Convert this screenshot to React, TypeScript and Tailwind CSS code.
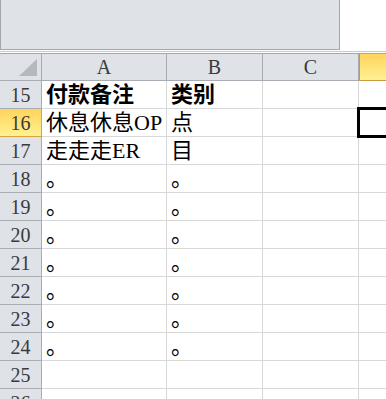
import React from "react";

const rows: { n: number; a: string; b: string; bold?: boolean }[] = [
  { n: 15, a: "付款备注", b: "类别", bold: true },
  { n: 16, a: "休息休息OP", b: "点" },
  { n: 17, a: "走走走ER", b: "目" },
  { n: 18, a: "。", b: "。" },
  { n: 19, a: "。", b: "。" },
  { n: 20, a: "。", b: "。" },
  { n: 21, a: "。", b: "。" },
  { n: 22, a: "。", b: "。" },
  { n: 23, a: "。", b: "。" },
  { n: 24, a: "。", b: "。" },
  { n: 25, a: "", b: "" },
  { n: 26, a: "", b: "" },
];

const cellFont = { fontFamily: '"Liberation Serif", "Noto Sans CJK SC", serif' };

export default function App() {
  return (
    <div className="relative w-[386px] h-[399px] overflow-hidden bg-white" style={{ fontFamily: '"Liberation Serif", serif' }}>
      {/* top ribbon area */}
      <div className="flex h-[50px]">
        <div className="w-[340px] h-[50px] bg-[#dfe2e7] border-l border-r border-b border-[#a3a7ad]" />
        <div className="flex-1 bg-white" />
      </div>
      <div className="h-[1px] bg-white" />
      <div className="h-[1px] bg-[#c5cad3]" />
      <div className="h-[1px] bg-white" />

      {/* column header */}
      <div className="grid grid-cols-[42px_125px_96px_96px_1fr] h-[28px] border-t border-[#a4a8ae] bg-[#dfe2e7] text-[20px] text-[#3a3a3a]">
        <div className="relative border-r border-b border-[#a9adb3]">
          <svg className="absolute left-[18px] top-[5px]" width="20" height="18" viewBox="0 0 20 18">
            <polygon points="19,0 19,17 1,17" fill="#b5b9bf" />
          </svg>
        </div>
        <div className="flex items-center justify-center border-r border-b border-[#a9adb3] leading-none">A</div>
        <div className="flex items-center justify-center border-r border-b border-[#a9adb3] leading-none">B</div>
        <div className="flex items-center justify-center border-r border-b border-[#a9adb3] leading-none">C</div>
        <div className="bg-gradient-to-b from-[#ffd45a] to-[#fff192] border-b border-l border-[#c89a3e]" />
      </div>

      {rows.map((r) => (
        <div key={r.n} className="grid grid-cols-[42px_125px_96px_96px_1fr] h-[28px]">
          <div
            className={
              r.n === 16
                ? "flex items-center justify-center bg-gradient-to-b from-[#ffd45a] to-[#fff192] border-r border-b border-[#d9a440] text-[20px] text-[#3a3a3a] leading-none"
                : "flex items-center justify-center bg-[#dfe2e7] border-r border-b border-[#a9adb3] text-[20px] text-[#3a3a3a] leading-none"
            }
          >
            {r.n}
          </div>
          <div
            className={"border-r border-b border-[#d8d8d8] pl-[4px] text-[22px] leading-[27px] text-black whitespace-nowrap overflow-hidden " + (r.bold ? "font-bold" : "")}
            style={cellFont}
          >
            {r.a}
          </div>
          <div
            className={"border-r border-b border-[#d8d8d8] pl-[4px] text-[22px] leading-[27px] text-black whitespace-nowrap overflow-hidden " + (r.bold ? "font-bold" : "")}
            style={cellFont}
          >
            {r.b}
          </div>
          <div className="border-r border-b border-[#d8d8d8]" />
          <div className="relative border-b border-[#d8d8d8]">
            {r.n === 16 && (
              <div className="absolute -left-[2px] -top-[2px] w-[100px] h-[31px] border-[3px] border-black" />
            )}
          </div>
        </div>
      ))}
    </div>
  );
}
